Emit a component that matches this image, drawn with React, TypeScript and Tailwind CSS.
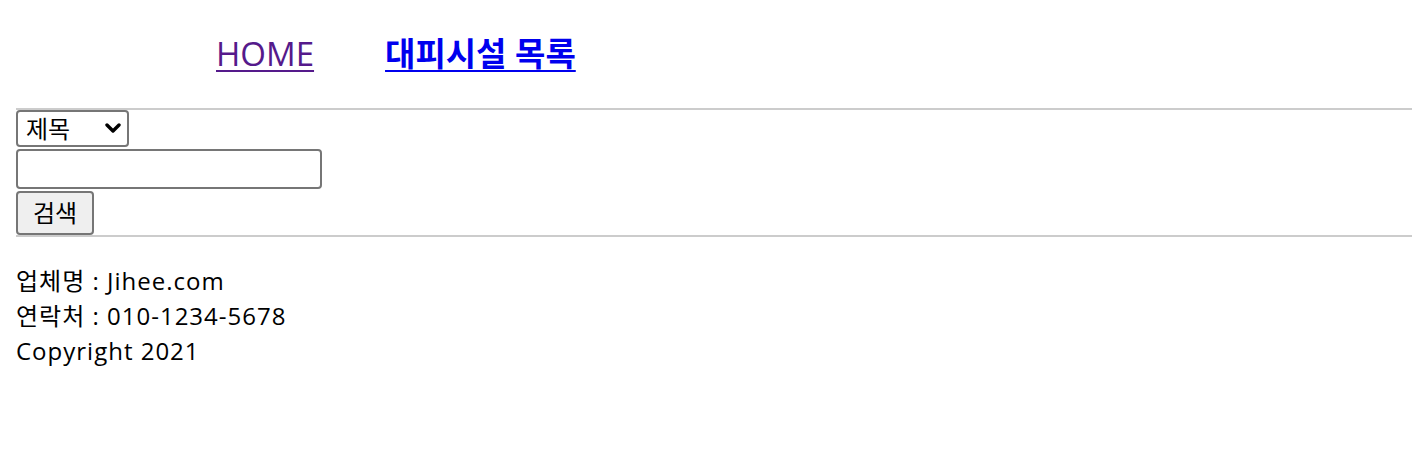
import React from "react";

export default function App() {
  const font = { fontFamily: '"Open Sans", "Noto Sans CJK KR", sans-serif' };
  return (
    <div className="px-4 bg-white text-black" style={font}>
      <nav className="flex items-end h-[108px] pb-[38px]">
        <a href="#" className="ml-[200px] text-[33px] leading-none text-[#551a8b] underline underline-offset-[4px] decoration-[2px]">
          HOME
        </a>
        <a href="#" className="ml-[71px] text-[33px] leading-none font-bold text-[#0000ee] underline underline-offset-[4px] decoration-[2px]">
          대피시설 목록
        </a>
      </nav>
      <div className="h-[2px] bg-[#cccccc] w-[1396px]" />
      <div className="flex flex-col items-start gap-[2px] pt-0">
        <div className="relative w-[113px] h-[37px]">
          <select className="appearance-none w-full h-full border-2 border-[#767676] rounded-[4px] bg-white pl-[8px] text-[24px] leading-none text-black outline-none">
            <option>제목</option>
          </select>
          <svg className="absolute right-[8px] top-[12px] pointer-events-none" width="16" height="12" viewBox="0 0 16 12">
            <path d="M2 3 L8 9 L14 3" fill="none" stroke="black" strokeWidth="3.4" strokeLinecap="round" strokeLinejoin="round" />
          </svg>
        </div>
        <input type="text" className="w-[306px] h-[40px] border-2 border-[#767676] rounded-[4px] bg-white outline-none" />
        <button className="w-[78px] h-[44px] border-2 border-[#767676] rounded-[4px] bg-[#efefef] text-[24px] leading-none text-black">
          검색
        </button>
      </div>
      <div className="h-[2px] bg-[#cccccc] w-[1396px]" />
      <div className="pt-[26px] text-[24px] leading-[35px] tracking-[1px] text-black">
        <div>업체명 : Jihee.com</div>
        <div>연락처 : 010-1234-5678</div>
        <div>Copyright 2021</div>
      </div>
    </div>
  );
}
